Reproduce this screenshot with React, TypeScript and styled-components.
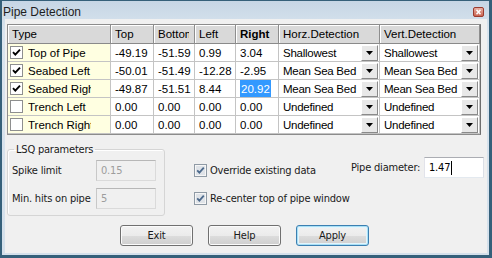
import React from 'react';
import styled, { createGlobalStyle, css } from 'styled-components';

const Global = createGlobalStyle`
  html, body { margin: 0; padding: 0; background: #ffffff; }
  body { width: 492px; height: 258px; overflow: hidden; }
  * { box-sizing: border-box; }
`;

const NARROW = `"DejaVu Sans Condensed", "Liberation Sans", sans-serif`;

const Window = styled.div`
  width: 492px;
  height: 258px;
  border-style: solid;
  border-color: #35607a;
  border-width: 1px 3px 3px 2px;
  background: linear-gradient(#c6d6e5, #d9e4ee 30px, #d4e0eb);
  padding: 0 2px 2px 3px;
  display: flex;
  flex-direction: column;
  font-family: "Liberation Sans", Arial, sans-serif;
  color: #000;
`;

const TitleBar = styled.div`
  height: 18px;
  padding: 4px 3px 0 0;
  margin-left: -2px;
  display: flex;
  align-items: center;
  justify-content: space-between;
`;

const Title = styled.span`
  font-size: 12px;
  line-height: 14px;
  color: #1e1e1e;
`;

const Body = styled.div`
  flex: 1;
  background: #f0f0f0;
  padding: 5px 0 0 2px;
  display: flex;
  flex-direction: column;
`;

const Grid = styled.div`
  display: grid;
  grid-template-columns: 103px 43px 41px 41px 43px 101px 100px;
  grid-template-rows: 19px repeat(5, 18px);
  width: 474px;
  border: 1px solid #8c8c8c;
  border-right-color: #6e6e6e;
  background: #fff;
  font-size: 11.5px;
`;

const HeadCell = styled.div<{ $bold?: boolean }>`
  background: #d9d9d9;
  border-right: 1px solid #8e8e8e;
  border-bottom: 1px solid #8a8a8a;
  box-shadow: inset 1px 1px 0 #ffffff;
  padding-left: 4px;
  display: flex;
  align-items: center;
  white-space: nowrap;
  overflow: hidden;
  font-weight: ${p => (p.$bold ? 'bold' : 'normal')};
`;

const Cell = styled.div<{ $type?: boolean }>`
  border-right: 1px solid #c4c4c4;
  border-bottom: 1px solid #c4c4c4;
  padding-left: ${p => (p.$type ? '2px' : '4px')};
  display: flex;
  align-items: center;
  white-space: nowrap;
  overflow: hidden;
  background: ${p => (p.$type ? '#ffffe1' : '#ffffff')};
`;

const Clip = styled.span<{ $w: number }>`
  display: inline-block;
  overflow: hidden;
  white-space: nowrap;
  width: ${p => p.$w}px;
`;

const TypeText = styled.span`
  margin-left: 5px;
  width: 63px;
  overflow: hidden;
  white-space: nowrap;
`;

const Selected = styled.span`
  align-self: stretch;
  display: flex;
  align-items: center;
  padding: 0 1px;
  background: #3399ff;
  color: #ffffff;
`;

const ComboText = styled.span`
  flex: 1;
  overflow: hidden;
  letter-spacing: -0.25px;
`;

const ComboButton = styled.span`
  width: 17px;
  height: 16px;
  margin-right: 1px;
  background: #e8e8e8;
  border-style: solid;
  border-width: 1px;
  border-color: #ffffff #8a8a8a #8a8a8a #ffffff;
  display: flex;
  align-items: center;
  justify-content: center;
  flex: none;
`;

const GridCheck = styled.span`
  width: 13px;
  height: 13px;
  border: 1px solid #8e8f8f;
  background: #ffffff;
  display: flex;
  align-items: center;
  justify-content: center;
  flex: none;
`;

const BottomRow = styled.div`
  display: flex;
  margin-top: 7px;
  font-family: ${NARROW};
  font-size: 11px;
  letter-spacing: -0.2px;
`;

const Group = styled.fieldset`
  width: 158px;
  flex: none;
  margin: 0;
  padding: 3px 0 6px 4px;
  border: 1px solid #d5d5d5;
  border-radius: 3px;
  box-shadow: inset 1px 1px 0 #ffffff;
  display: flex;
  flex-direction: column;
  gap: 7px;
`;

const Legend = styled.legend`
  margin-left: 2px;
  padding: 0 2px;
  line-height: 15px;
  color: #1a1a1a;
`;

const FieldRow = styled.div`
  display: flex;
  align-items: center;
`;

const FieldLabel = styled.span`
  width: 84px;
  flex: none;
  overflow: hidden;
  white-space: nowrap;
  color: #1a1a1a;
`;

const TextBox = styled.div<{ $disabled?: boolean }>`
  width: 60px;
  height: 21px;
  flex: none;
  padding-left: 4px;
  display: flex;
  align-items: center;
  border: 1px solid;
  ${p =>
    p.$disabled
      ? css`
          border-color: #b7b7b7 #dadada #dadada #c8c8c8;
          background: #f0f0f0;
          color: #9d9d9d;
        `
      : css`
          border-color: #abadb3 #dbdfe6 #e3e9ef #e2e3ea;
          background: #ffffff;
          color: #000;
        `}
`;

const Caret = styled.span`
  width: 1px;
  height: 14px;
  background: #000;
  margin-left: 1px;
`;

const Options = styled.div`
  width: 157px;
  flex: none;
  margin-left: 29px;
  padding-top: 20px;
  display: flex;
  flex-direction: column;
  gap: 12px;
`;

const OptionRow = styled.label`
  display: flex;
  align-items: center;
  height: 16px;
  gap: 3px;
  color: #1a1a1a;
  white-space: nowrap;
  & > svg { flex: none; }
`;

const DiameterRow = styled.div`
  display: flex;
  align-items: center;
  align-self: flex-start;
  margin-top: 15px;
`;

const DiameterLabel = styled.span`
  width: 73px;
  flex: none;
  color: #1a1a1a;
  white-space: nowrap;
`;

const Buttons = styled.div`
  display: flex;
  gap: 15px;
  padding-left: 113px;
  margin-top: 9px;
`;

const Button = styled.button<{ $default?: boolean }>`
  width: 73px;
  height: 21px;
  padding: 0;
  border: 1px solid #707070;
  border-radius: 3px;
  background: linear-gradient(#f2f2f2 0%, #ebebeb 50%, #dddddd 51%, #cfcfcf 100%);
  box-shadow: inset 0 0 0 1px #fbfbfb;
  font-family: ${NARROW};
  font-size: 11px;
  letter-spacing: -0.2px;
  color: #1a1a1a;
  ${p =>
    p.$default &&
    css`
      border-color: #3c7fb1;
      box-shadow: inset 0 0 0 1px #a8e0f6, inset 0 0 0 2px #e3f4fc;
    `}
`;

const Check = () => (
  <svg width="9" height="9" viewBox="0 0 9 9">
    <path d="M1 4.2 L3.3 6.6 L8 1.6" fill="none" stroke="#000" strokeWidth="1.9" />
  </svg>
);

const Arrow = () => (
  <svg width="7" height="4" viewBox="0 0 7 4">
    <path d="M0 0 H7 L3.5 4 Z" fill="#000" />
  </svg>
);

const OptionBox = () => (
  <svg width="13" height="13" viewBox="0 0 13 13">
    <rect x="0.5" y="0.5" width="12" height="12" fill="#f6f6f6" stroke="#8f9aa5" />
    <rect x="2" y="2" width="9" height="9" fill="#dfe3e8" />
    <path d="M3.2 6.3 L5.4 8.6 L9.8 3.6" fill="none" stroke="#4d6a8c" strokeWidth="1.8" />
  </svg>
);

const CloseIcon = () => (
  <svg width="11" height="10" viewBox="0 0 11 10">
    <defs>
      <linearGradient id="clg" x1="0" y1="0" x2="0" y2="1">
        <stop offset="0" stopColor="#e9b3a7" />
        <stop offset="1" stopColor="#c9604c" />
      </linearGradient>
    </defs>
    <rect x="0.5" y="0.5" width="10" height="9" rx="1.5" fill="url(#clg)" stroke="#9b3b2f" />
    <path d="M3.5 2.8 L7.5 7.2 M7.5 2.8 L3.5 7.2" stroke="#ffffff" strokeWidth="1.5" />
  </svg>
);

type Row = {
  name: string;
  checked: boolean;
  top: string;
  bottom: string;
  left: string;
  right: string;
  horz: string;
  vert: string;
  selected?: boolean;
};

const rows: Row[] = [
  { name: 'Top of Pipe', checked: true, top: '-49.19', bottom: '-51.59', left: '0.99', right: '3.04', horz: 'Shallowest', vert: 'Shallowest' },
  { name: 'Seabed Left', checked: true, top: '-50.01', bottom: '-51.49', left: '-12.28', right: '-2.95', horz: 'Mean Sea Bed', vert: 'Mean Sea Bed' },
  { name: 'Seabed Right', checked: true, top: '-49.87', bottom: '-51.51', left: '8.44', right: '20.92', horz: 'Mean Sea Bed', vert: 'Mean Sea Bed', selected: true },
  { name: 'Trench Left', checked: false, top: '0.00', bottom: '0.00', left: '0.00', right: '0.00', horz: 'Undefined', vert: 'Undefined' },
  { name: 'Trench Right', checked: false, top: '0.00', bottom: '0.00', left: '0.00', right: '0.00', horz: 'Undefined', vert: 'Undefined' },
];

const Combo = ({ value }: { value: string }) => (
  <Cell>
    <ComboText>{value}</ComboText>
    <ComboButton>
      <Arrow />
    </ComboButton>
  </Cell>
);

export default function App() {
  return (
    <>
      <Global />
      <Window>
        <TitleBar>
          <Title>Pipe Detection</Title>
          <CloseIcon />
        </TitleBar>
        <Body>
          <Grid>
            <HeadCell>Type</HeadCell>
            <HeadCell>Top</HeadCell>
            <HeadCell>
              <Clip $w={31}>Bottom</Clip>
            </HeadCell>
            <HeadCell>Left</HeadCell>
            <HeadCell $bold>Right</HeadCell>
            <HeadCell>Horz.Detection</HeadCell>
            <HeadCell>Vert.Detection</HeadCell>
            {rows.map(r => (
              <React.Fragment key={r.name}>
                <Cell $type>
                  <GridCheck>{r.checked && <Check />}</GridCheck>
                  <TypeText>{r.name}</TypeText>
                </Cell>
                <Cell>{r.top}</Cell>
                <Cell>{r.bottom}</Cell>
                <Cell>{r.left}</Cell>
                <Cell>{r.selected ? <Selected>{r.right}</Selected> : r.right}</Cell>
                <Combo value={r.horz} />
                <Combo value={r.vert} />
              </React.Fragment>
            ))}
          </Grid>
          <BottomRow>
            <Group>
              <Legend>LSQ parameters</Legend>
              <FieldRow>
                <FieldLabel>Spike limit</FieldLabel>
                <TextBox $disabled>0.15</TextBox>
              </FieldRow>
              <FieldRow>
                <FieldLabel>Min. hits on pipe</FieldLabel>
                <TextBox $disabled>5</TextBox>
              </FieldRow>
            </Group>
            <Options>
              <OptionRow>
                <OptionBox />
                Override existing data
              </OptionRow>
              <OptionRow>
                <OptionBox />
                Re-center top of pipe window
              </OptionRow>
            </Options>
            <DiameterRow>
              <DiameterLabel>Pipe diameter:</DiameterLabel>
              <TextBox>
                1.47
                <Caret />
              </TextBox>
            </DiameterRow>
          </BottomRow>
          <Buttons>
            <Button>Exit</Button>
            <Button>Help</Button>
            <Button $default>Apply</Button>
          </Buttons>
        </Body>
      </Window>
    </>
  );
}
